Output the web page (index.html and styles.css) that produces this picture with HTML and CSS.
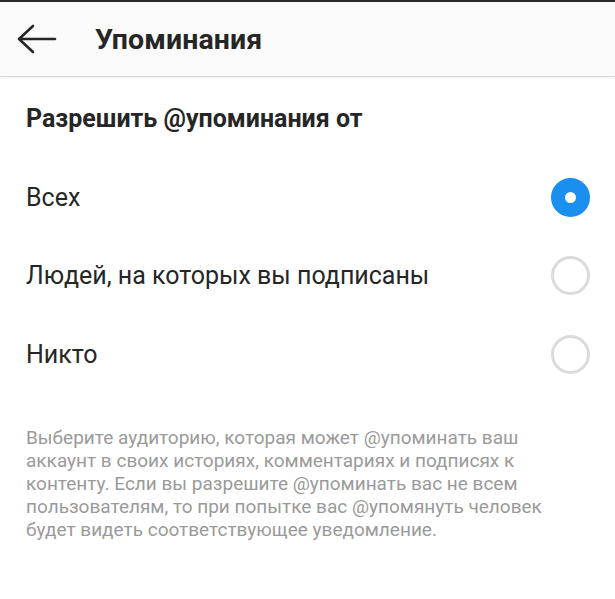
FILE: index.html
```html
<!DOCTYPE html>
<html lang="ru">
<head>
<meta charset="utf-8">
<link rel="stylesheet" href="styles.css">
</head>
<body>
<div class="screen">
  <header class="topbar">
    <svg class="back" width="40" height="30" viewBox="0 0 40 30">
      <path d="M2 15 H38 M16 2 L2 15 L16 28" fill="none" stroke="#262626" stroke-width="2.6" stroke-linecap="round" stroke-linejoin="round"/>
    </svg>
    <h1 class="title">Упоминания</h1>
  </header>
  <main class="content">
    <h2 class="section-title">Разрешить @упоминания от</h2>
    <ul class="options">
      <li class="option"><span class="label">Всех</span><span class="radio radio-on"></span></li>
      <li class="option"><span class="label">Людей, на которых вы подписаны</span><span class="radio"></span></li>
      <li class="option"><span class="label">Никто</span><span class="radio"></span></li>
    </ul>
    <p class="note">Выберите аудиторию, которая может @упоминать ваш аккаунт в своих историях, комментариях и подписях к контенту. Если вы разрешите @упоминать вас не всем пользователям, то при попытке вас @упомянуть человек будет видеть соответствующее уведомление.</p>
  </main>
</div>
</body>
</html>
```
FILE: styles.css
```css
* { box-sizing: border-box; }
html, body { margin: 0; padding: 0; background: #fff; }
body { font-family: Roboto, "Noto Sans", sans-serif; color: #262626; }
.screen { width: 615px; height: 599px; overflow: hidden; border-top: 2px solid #2a2a2a; }
.topbar {
  height: 75px;
  background: #fafafa;
  border-bottom: 1px solid #d6d6d6;
  box-shadow: 0 1px 2px rgba(0,0,0,0.06);
  display: flex;
  align-items: center;
  padding-left: 17px;
}
.back { display: block; margin-right: 38px; margin-top: 0; }
.title { margin: 0; font-size: 28.5px; font-weight: 700; color: #262626; letter-spacing: 0.1px; }
.content { padding: 0 26px; }
.section-title { margin: 27px 0 0; font-size: 25px; font-weight: 700; line-height: 30px; color: #262626; }
.options { list-style: none; margin: 24px 0 0; padding: 0; }
.option { display: flex; align-items: center; justify-content: space-between; height: 78.5px; }
.label { font-size: 25px; color: #262626; }
.radio {
  width: 39px; height: 39px; border-radius: 50%;
  border: 3px solid #dbdbdb; margin-right: -1px; flex: none;
}
.radio-on { border: 14px solid #1a8fef; background: #fff; }
.note { margin: 32px 0 0; font-size: 19px; line-height: 23px; color: #9a9a9a; }
```
